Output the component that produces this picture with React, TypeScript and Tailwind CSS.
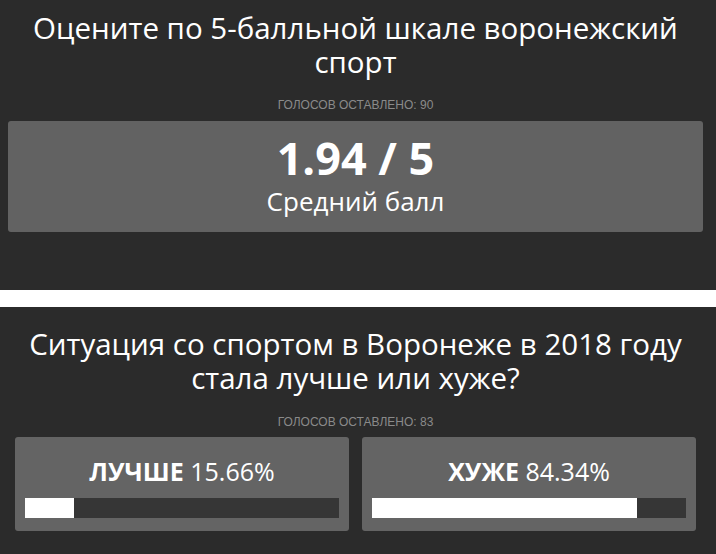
const sans = { fontFamily: '"Open Sans", "Noto Sans", sans-serif' };

type Option = { label: string; percent: number };

function VoteCount({ count }: { count: number }) {
    return (
        <div className="text-center text-[12px] leading-[14px] uppercase text-[#8a8a8a] font-['Liberation_Sans',Arial,sans-serif]">
            Голосов оставлено: {count}
        </div>
    );
}

function OptionCard({ option }: { option: Option }) {
    return (
        <div className="rounded-[3px] bg-[#646464] px-[10px] pt-[19px] pb-[13px]">
            <div className="text-center text-[25px] leading-[30px] text-white">
                <span className="font-bold">{option.label}</span> {option.percent.toFixed(2)}%
            </div>
            <div className="mt-[12px] h-[20px] bg-[#363636]">
                <div className="h-full bg-white" style={{ width: `${option.percent}%` }} />
            </div>
        </div>
    );
}

export default function App() {
    const options: Option[] = [
        { label: 'ЛУЧШЕ', percent: 15.66 },
        { label: 'ХУЖЕ', percent: 84.34 },
    ];

    return (
        <div className="min-h-[554px] bg-[#2b2b2b]" style={sans}>
            {/* Rating poll */}
            <section className="pt-[11px] pb-[58px]">
                <div className="ml-2 w-[695px]">
                    <h2 className="text-center text-[29.5px] leading-[34px] font-normal text-white">
                        Оцените по 5-балльной шкале воронежский спорт
                    </h2>
                    <div className="mt-[19px] mb-[9px]">
                        <VoteCount count={90} />
                    </div>
                    <div className="rounded-[3px] bg-[#626262] pt-[11px] pb-[16px] text-center text-white">
                        <div className="text-[45px] leading-[52px] font-bold">1.94 / 5</div>
                        <div className="mt-[2px] text-[26px] leading-[30px]">Средний балл</div>
                    </div>
                </div>
            </section>

            <div className="h-[17px] bg-white" />

            {/* Better / worse poll */}
            <section className="pt-[20px] pb-[22px]">
                <div className="ml-2 w-[695px]">
                    <h2 className="mx-auto w-[680px] text-center text-[29.5px] leading-[34px] font-normal text-white">
                        Ситуация со спортом в Воронеже в 2018 году стала лучше или хуже?
                    </h2>
                    <div className="mt-[20px] mb-[8px]">
                        <VoteCount count={83} />
                    </div>
                    <div className="grid grid-cols-2 gap-[13px] px-[7px]">
                        {options.map((option) => (
                            <OptionCard key={option.label} option={option} />
                        ))}
                    </div>
                </div>
            </section>
        </div>
    );
}
